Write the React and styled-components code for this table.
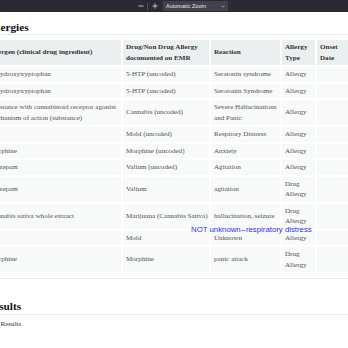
import React from "react";
import styled, { createGlobalStyle } from "styled-components";

const Global = createGlobalStyle`
  * { box-sizing: border-box; }
  html, body { margin: 0; padding: 0; background: #ffffff; overflow: hidden; }
  body { font-family: "Liberation Serif", "Times New Roman", serif; }
`;

const Toolbar = styled.div`
  height: 12px;
  background: #2b2a33;
  display: flex;
  align-items: center;
  padding-left: 136px;
  font-family: "Liberation Sans", Arial, sans-serif;
`;

const ToolButton = styled.div`
  width: 9px;
  height: 10px;
  display: flex;
  align-items: center;
  justify-content: center;
  color: #cfcfd3;
`;

const ToolSep = styled.div`
  width: 1px;
  height: 7px;
  background: #55545c;
  margin: 0 2px;
`;

const ZoomSelect = styled.div`
  margin-left: 4px;
  width: 65px;
  height: 10px;
  background: #42414d;
  border-radius: 1px;
  display: flex;
  align-items: center;
  justify-content: space-between;
  padding: 0 3px 0 3px;
  color: #e6e6ea;
  font-size: 5.5px;
  line-height: 10px;
  white-space: nowrap;
`;

const Page = styled.div`
  position: relative;
  margin-left: -14px;
  width: 420px;
  padding-top: 8.5px;
`;

const Section = styled.section`
  border-bottom: 1.5px solid #eceff0;
  padding-bottom: ${(p) => p.$pb || 0}px;
`;

const Heading = styled.h2`
  margin: ${(p) => p.$mt}px 0 0 0;
  font-size: 11.3px;
  line-height: 13px;
  font-weight: bold;
  color: #111;
  border-bottom: 1.5px solid #eceff0;
  padding-bottom: 0.5px;
`;

const Table = styled.table`
  margin: 3px 0 0 -2px;
  border-collapse: separate;
  border-spacing: 2px;
  table-layout: fixed;
  width: 368px;
`;

const Th = styled.th`
  background: #ebeff0;
  color: #333;
  font-size: 7.1px;
  line-height: 10.5px;
  font-weight: bold;
  text-align: left;
  vertical-align: middle;
  padding: 2px 3px;
`;

const Td = styled.td`
  background: #f8f9f9;
  color: #525252;
  font-size: 7.1px;
  line-height: 10.5px;
  vertical-align: middle;
  padding: 2px 3px;
  white-space: ${(p) => (p.$nowrap ? "nowrap" : "normal")};
  overflow: hidden;
`;

const Annotation = styled.div`
  position: absolute;
  left: 205px;
  top: 212.5px;
  font-family: "Liberation Sans", Arial, sans-serif;
  font-size: 7.8px;
  line-height: 9px;
  color: #2b2bf5;
  white-space: nowrap;
`;

const BodyText = styled.p`
  margin: 4.5px 0 0 0;
  padding-left: 4px;
  font-size: 7.1px;
  line-height: 11px;
  color: #333;
`;

const rows = [
  ["5-Hydroxytryptophan", "5-HTP (uncoded)", "Seratonin syndrome", "Allergy"],
  ["5-Hydroxytryptophan", "5-HTP (uncoded)", "Serotonin Syndrome", "Allergy"],
  [
    "Substance with cannabinoid receptor agonist mechanism of action (substance)",
    "Cannabis (uncoded)",
    "Severe Hallucinations and Panic",
    "Allergy",
  ],
  ["", "Mold (uncoded)", "Respitory Distress", "Allergy"],
  ["Morphine", "Morphine (uncoded)", "Anxiety", "Allergy"],
  ["Diazepam", "Valium (uncoded)", "Agitation", "Allergy"],
  ["Diazepam", "Valium", "agitation", "Drug Allergy"],
  ["Cannabis sativa whole extract", "Marijuana (Cannabis Sativa)", "hallucination, seizure", "Drug Allergy"],
  ["", "Mold", "Unknown", "Allergy"],
  ["Morphine", "Morphine", "panic attack", "Drug Allergy"],
];

function Minus() {
  return (
    <svg width="6" height="6" viewBox="0 0 6 6">
      <path d="M0.5 3H5.5" stroke="#cfcfd3" strokeWidth="0.9" />
    </svg>
  );
}
function Plus() {
  return (
    <svg width="6" height="6" viewBox="0 0 6 6">
      <path d="M0.5 3H5.5M3 0.5V5.5" stroke="#cfcfd3" strokeWidth="0.9" />
    </svg>
  );
}
function Chevron() {
  return (
    <svg width="4" height="3" viewBox="0 0 4 3">
      <path d="M0.5 0.8L2 2.2L3.5 0.8" stroke="#cfcfd3" strokeWidth="0.6" fill="none" />
    </svg>
  );
}

export default function App() {
  return (
    <>
      <Global />
      <Toolbar>
        <ToolButton><Minus /></ToolButton>
        <ToolSep />
        <ToolButton><Plus /></ToolButton>
        <ZoomSelect>
          <span>Automatic Zoom</span>
          <Chevron />
        </ZoomSelect>
      </Toolbar>
      <Page>
        <Section $pb={4}>
          <Heading $mt={0}>Allergies</Heading>
          <Table>
            <colgroup>
              <col style={{ width: 135 }} />
              <col style={{ width: 86 }} />
              <col style={{ width: 69 }} />
              <col style={{ width: 33 }} />
              <col style={{ width: 33 }} />
            </colgroup>
            <thead>
              <tr>
                <Th>Allergen (clinical drug ingredient)</Th>
                <Th>Drug/Non Drug Allergy documented on EMR</Th>
                <Th>Reaction</Th>
                <Th>Allergy Type</Th>
                <Th>Onset Date</Th>
              </tr>
            </thead>
            <tbody>
              {rows.map((r, i) => (
                <tr key={i}>
                  <Td>{r[0]}</Td>
                  <Td $nowrap>{r[1]}</Td>
                  <Td>{r[2]}</Td>
                  <Td>{r[3]}</Td>
                  <Td />
                </tr>
              ))}
            </tbody>
          </Table>
        </Section>
        <Annotation>NOT unknown--respiratory distress</Annotation>
        <Heading $mt={21}>Results</Heading>
        <BodyText>No Results</BodyText>
      </Page>
    </>
  );
}
